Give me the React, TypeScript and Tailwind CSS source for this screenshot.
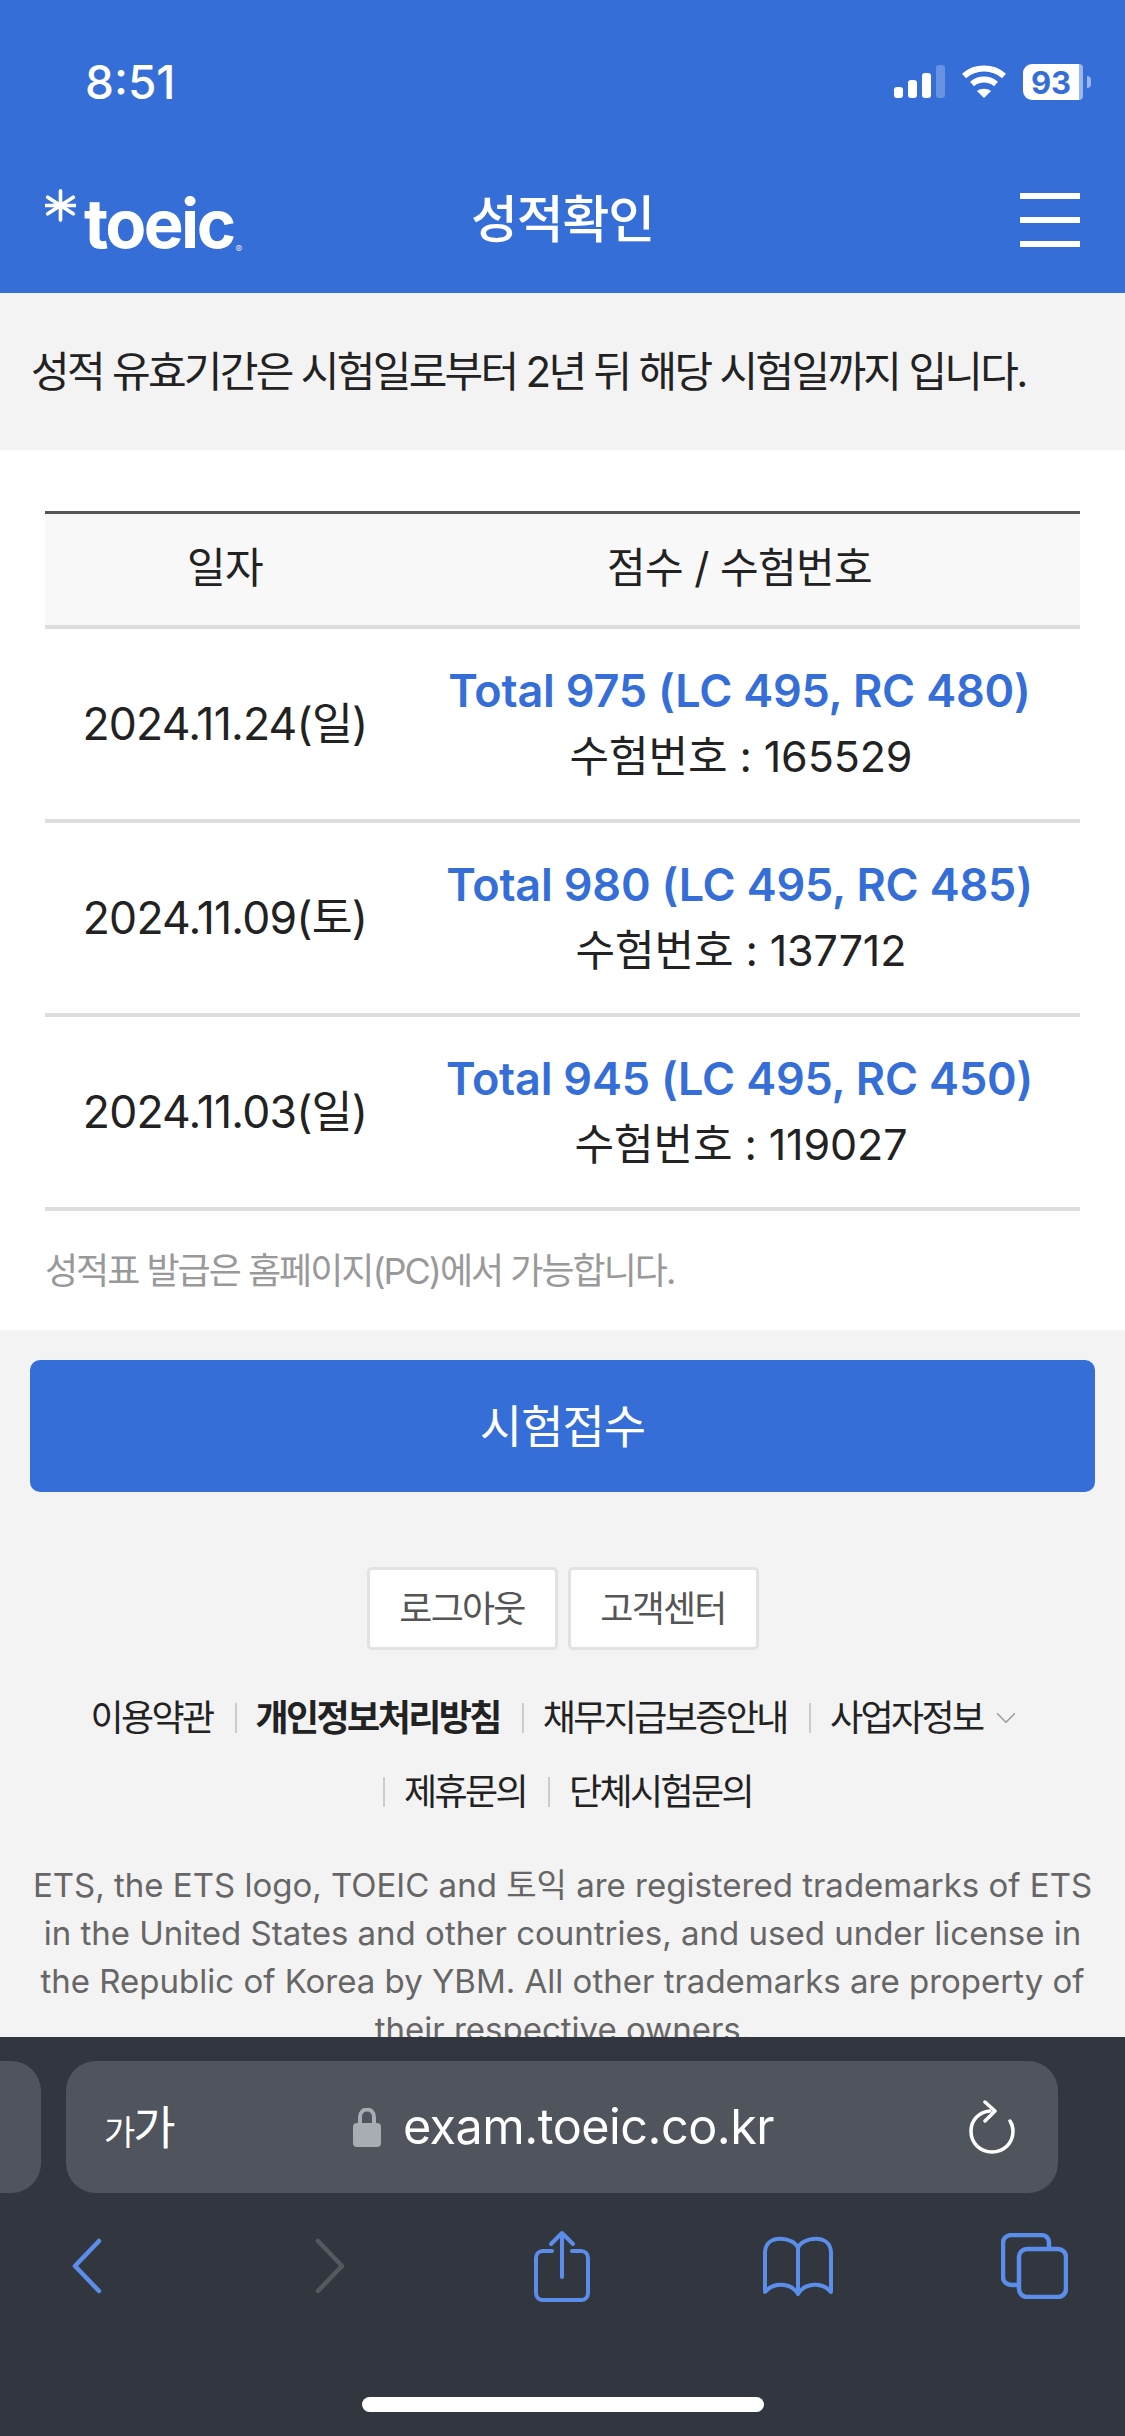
import React from 'react';
import { ChevronDown } from 'lucide-react';

const scores = [
  { date: '2024.11.24(일)', total: 'Total 975 (LC 495, RC 480)', num: '수험번호 : 165529' },
  { date: '2024.11.09(토)', total: 'Total 980 (LC 495, RC 485)', num: '수험번호 : 137712' },
  { date: '2024.11.03(일)', total: 'Total 945 (LC 495, RC 450)', num: '수험번호 : 119027' },
];

const StatusIcons = () => (
  <div className="flex items-center">
    {/* signal bars */}
    <svg width="52" height="34" viewBox="0 0 52 34" fill="#fff">
      <rect x="0" y="22" width="9" height="11" rx="3" />
      <rect x="14" y="15" width="9" height="18" rx="3" />
      <rect x="28" y="8" width="9" height="25" rx="3" />
      <rect x="42" y="0" width="9" height="33" rx="3" opacity="0.25" />
    </svg>
    {/* wifi */}
    <svg className="ml-[15px]" width="46" height="34" viewBox="0 0 46 34" fill="none" stroke="#fff" strokeWidth="6">
      <path d="M3 11 C14 1 32 1 43 11" />
      <path d="M11 19 C18 13 28 13 35 19" />
      <path d="M23 33 L16 26 C20 23 26 23 30 26 Z" fill="#fff" stroke="none" />
    </svg>
    {/* battery */}
    <div className="ml-[16px] flex items-center">
      <div className="w-[56px] h-[36px] rounded-l-[9px] bg-white flex items-center justify-center text-[#366ed8] text-[31px] font-bold leading-none">
        93
      </div>
      <div className="w-[4px] h-[36px] rounded-r-[9px] bg-white/50" />
      <div className="ml-[4px] w-[4px] h-[12px] rounded-r-full bg-white/50" />
    </div>
  </div>
);

const TopBar = () => (
  <header className="bg-[#366ed8] h-[293px] text-white">
    <div className="h-[164px] pl-[85px] pr-[34px] pt-[58px] flex justify-between items-start">
      <span className="text-[46px] leading-[48px] font-medium">8:51</span>
      <div className="pt-[6px]">
        <StatusIcons />
      </div>
    </div>
    <div className="grid grid-cols-[1fr_auto_1fr] items-center px-[45px] h-[112px]">
      <div className="flex items-start">
        <svg width="31" height="33" viewBox="0 0 34 36" stroke="#fff" strokeWidth="4" strokeLinecap="round" className="mt-[3px]">
          <path d="M17 2 V34 M3 9 L31 27 M31 9 L3 27 M1 18 H33" />
        </svg>
        <span className="text-[67px] leading-[62px] font-bold tracking-[-2.6px] mt-[7px] ml-[8px]">toeic</span>
        <span className="text-[10px] leading-none mt-[58px] ml-[2px] opacity-80">®</span>
      </div>
      <h1 className="text-[51px] font-medium tracking-[-1.2px] leading-[60px]">성적확인</h1>
      <div className="w-[60px] flex flex-col gap-[18px] justify-self-end">
        <span className="h-[6px] bg-white" />
        <span className="h-[6px] bg-white" />
        <span className="h-[6px] bg-white" />
      </div>
    </div>
  </header>
);

const ScoreTable = () => (
  <section className="bg-white pt-[61px] px-[45px] h-[880px]">
    <div className="border-t-[3px] border-[#555] bg-[#f8f8f8] border-b-[4px] border-b-[#ddd] h-[118px] pb-[4px] grid grid-cols-[360px_669px] items-center text-center text-[42px] tracking-[-0.6px] text-[#222]">
      <span>일자</span>
      <span>점수 / 수험번호</span>
    </div>
    {scores.map(s => (
      <div key={s.date} className="h-[194px] border-b-[4px] border-[#ddd] grid grid-cols-[360px_669px] items-center text-center text-[#222]">
        <span className="text-[44.5px] tracking-[-0.8px]">{s.date}</span>
        <div className="-mt-[2px]">
          <p className="text-[45px] leading-[66px] font-semibold text-[#366ed8] tracking-[-0.2px] whitespace-nowrap">{s.total}</p>
          <p className="text-[43px] leading-[64px] tracking-[-0.1px] pl-[3px]">{s.num}</p>
        </div>
      </div>
    ))}
    <p className="text-[36px] leading-[50px] tracking-[-2px] text-[#999] pt-[35px]">성적표 발급은 홈페이지(PC)에서 가능합니다.</p>
  </section>
);

const footerLinks = ['이용약관', '개인정보처리방침', '채무지급보증안내', '사업자정보', '제휴문의', '단체시험문의'];

const Footer = () => (
  <footer className="bg-[#f3f3f3] pt-[30px]">
    <button className="mx-[30px] w-[1065px] h-[132px] rounded-[10px] bg-[#366ed8] text-white text-[46px] tracking-[-1px]">
      시험접수
    </button>
    <div className="flex justify-center gap-[10px] mt-[75px]">
      <button className="w-[191px] h-[83px] bg-white border-[3px] border-[#e2e2e2] rounded-[5px] text-[36px] tracking-[-1.8px] text-[#555]">로그아웃</button>
      <button className="w-[191px] h-[83px] bg-white border-[3px] border-[#e2e2e2] rounded-[5px] text-[36px] tracking-[-1.8px] text-[#555]">고객센터</button>
    </div>
    <nav className="mt-[31px] mx-auto w-[972px] pr-[12px] flex flex-wrap justify-center text-[36px] leading-[74px] tracking-[-2.6px] text-[#222]">
      {footerLinks.map((label, i) => (
        <span key={label} className={`flex items-center ${i === 1 ? 'font-bold' : ''}`}>
          {i > 0 && <i className="w-[2px] h-[30px] bg-[#ccc] ml-[22px] mr-[19px]" />}
          {label}
          {i === 3 && <ChevronDown className="ml-[6px] text-[#999]" size={34} strokeWidth={1} />}
        </span>
      ))}
    </nav>
    <p className="mt-[32px] px-[25px] text-center text-[33px] leading-[48px] text-[#666]">
      ETS, the ETS logo, TOEIC and 토익 are registered trademarks of ETS in the United States and other countries, and used under license in the Republic of Korea by YBM. All other trademarks are property of their respective owners.
    </p>
  </footer>
);

const SafariBar = () => (
  <div className="absolute left-0 right-0 bottom-0 h-[399px] bg-[#32363f]">
    <div className="relative pt-[24px] pl-[66px]">
      <div className="absolute left-[-40px] top-[24px] w-[81px] h-[132px] rounded-[30px] bg-[#50545d]" />
      <div className="w-[992px] h-[132px] rounded-[30px] bg-[#50545d] flex items-center text-white pl-[38px] pr-[43px]">
        <span className="w-[74px] text-[46px] leading-none flex items-end tracking-[-2px]"><span className="text-[34px]">가</span>가</span>
        <div className="flex-1 flex items-center justify-center pr-[20px]">
          <svg width="28" height="39" viewBox="0 0 28 39" className="mr-[22px]">
            <path d="M7 17 V9 C7 -1 21 -1 21 9 V17" fill="none" stroke="#a9acb3" strokeWidth="4" />
            <rect x="0" y="15" width="28" height="24" rx="4" fill="#a9acb3" />
          </svg>
          <span className="text-[48.5px] leading-none tracking-[-0.5px]">exam.toeic.co.kr</span>
        </div>
        <svg width="46" height="54" viewBox="0 0 46 54" fill="none" stroke="#fff" strokeWidth="3.5" strokeLinecap="round" strokeLinejoin="round">
          <path d="M21 11 C10 12 2 20 2 31 C2 43 11 52 23 52 C35 52 44 43 44 31 C44 27 43 24 41 21" />
          <path d="M16 2 L26 11 L16 21" />
        </svg>
      </div>
    </div>
    {/* back, forward, share, bookmarks, tabs */}
    <div className="flex items-center pl-[72px] mt-[37px] h-[72px]">
      <svg width="30" height="56" viewBox="0 0 30 56" fill="none" stroke="#5b8eeb" strokeWidth="4.5" strokeLinecap="round" strokeLinejoin="round">
        <path d="M27 3 L3 28 L27 53" />
      </svg>
      <svg className="ml-[213px]" width="30" height="56" viewBox="0 0 30 56" fill="none" stroke="#55585f" strokeWidth="4.5" strokeLinecap="round" strokeLinejoin="round">
        <path d="M3 3 L27 28 L3 53" />
      </svg>
      <svg className="ml-[189px]" width="56" height="72" viewBox="0 0 56 72" fill="none" stroke="#5b8eeb" strokeWidth="4" strokeLinecap="round" strokeLinejoin="round">
        <path d="M18 21 H9 C5 21 2 24 2 28 V63 C2 67 5 70 9 70 H47 C51 70 54 67 54 63 V28 C54 24 51 21 47 21 H38" />
        <path d="M28 47 V3 M17 14 L28 3 L39 14" />
      </svg>
      <svg className="ml-[173px]" width="70" height="60" viewBox="0 0 70 60" fill="none" stroke="#5b8eeb" strokeWidth="4" strokeLinejoin="round">
        <path d="M35 12 C31 1 3 -3 2 16 V56 C10 46 28 46 35 58 C42 46 60 46 68 56 V16 C67 -3 39 1 35 12 Z" />
        <path d="M35 12 V58" />
      </svg>
      <svg className="ml-[168px]" width="67" height="66" viewBox="0 0 67 66" fill="none" stroke="#5b8eeb" strokeWidth="4.5" strokeLinejoin="round">
        <path d="M48 15 V10 C48 5 45 2 40 2 H11 C6 2 2 5 2 10 V44 C2 49 6 52 12 52 H16" />
        <rect x="18" y="16" width="47" height="48" rx="8" />
      </svg>
    </div>
    <div className="absolute left-[362px] bottom-[24px] w-[402px] h-[15px] rounded-full bg-white" />
  </div>
);

export default function App() {
  return (
    <div className="relative w-[1125px] h-[2436px] overflow-hidden bg-[#f3f3f3] font-['Inter','Noto_Sans_CJK_KR',sans-serif]">
      <TopBar />
      <div className="bg-[#f3f3f3] h-[157px] pl-[31px] flex items-center text-[42px] tracking-[-2.7px] text-[#222]">
        성적 유효기간은 시험일로부터 2년 뒤 해당 시험일까지 입니다.
      </div>
      <ScoreTable />
      <Footer />
      <SafariBar />
    </div>
  );
}
